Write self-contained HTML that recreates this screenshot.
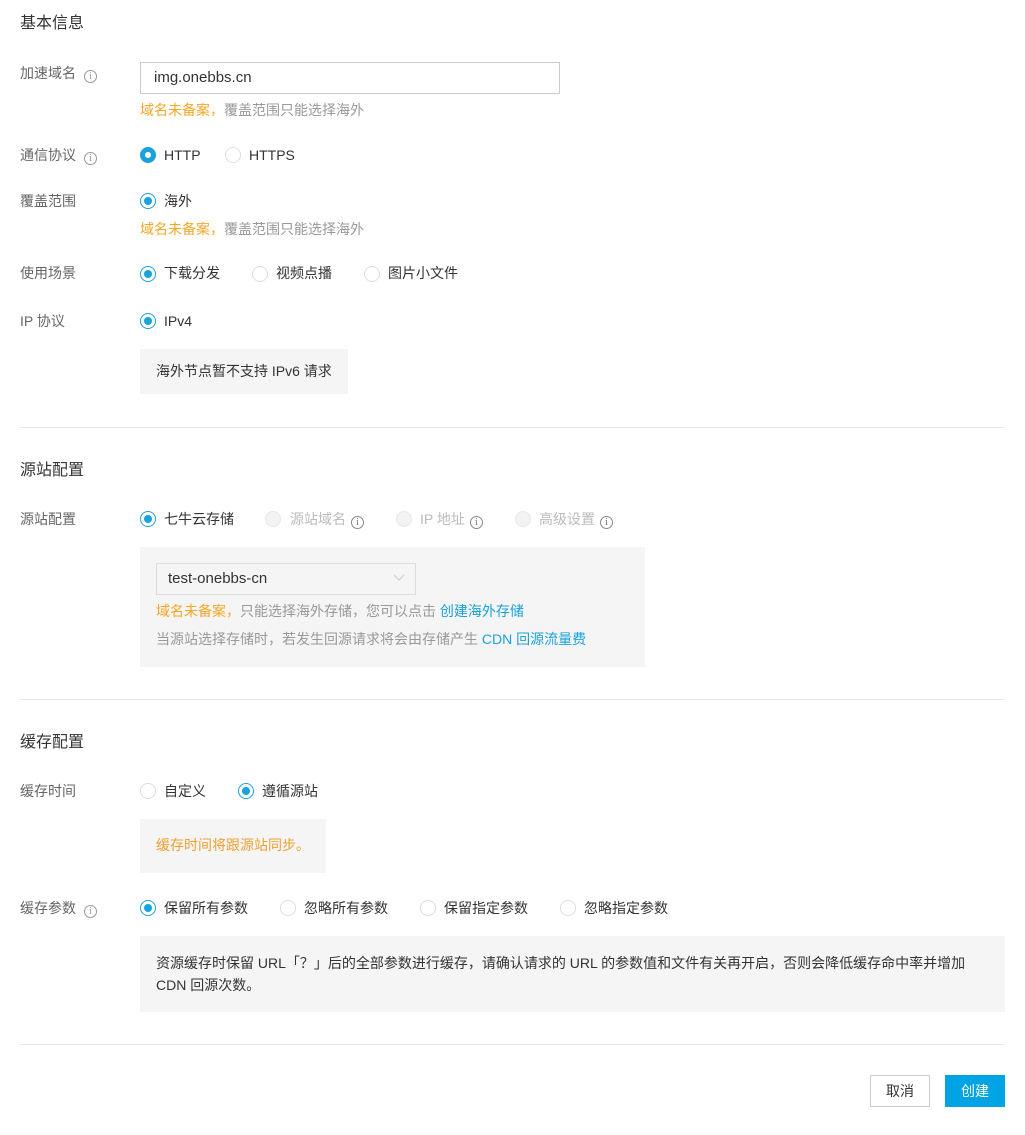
<!DOCTYPE html>
<html><head><meta charset="utf-8"><style>
*{margin:0;padding:0;box-sizing:border-box}
body{width:1025px;height:1135px;background:#fff;position:relative;font-family:"Liberation Sans","Noto Sans CJK SC",sans-serif;font-size:14px;color:#333;overflow:hidden}
.t{position:absolute;line-height:20px;height:20px;white-space:nowrap}
.h{font-size:16px;color:#333}
.l{color:#666}
.o{color:#f5a623}
.g{color:#999}
.b{color:#1aa2dc}
.d{color:#bbb}
.hr{position:absolute;left:20px;width:984px;height:1px;background:#e9e9e9}
.box{position:absolute;background:#f5f5f5}
.r{position:absolute;width:16px;height:16px;border-radius:50%;border:1px solid #ddd;background:#fff}
.r.on{border-color:#1aa2dc}
.r.on::after{content:"";position:absolute;left:3px;top:3px;width:8px;height:8px;border-radius:50%;background:#1aa2dc}
.r.foc{border:5px solid #1aa2dc}
.r.dis{background:#f3f3f3;border-color:#e8e8e8}
.i{display:inline-block;width:13px;height:13px;border:1px solid #999;border-radius:50%;font-size:10px;line-height:11px;text-align:center;color:#999;vertical-align:-1px;margin-left:8px;font-family:"Liberation Serif",serif}
.btn{position:absolute;height:32px;line-height:30px;text-align:center;font-size:14px}
</style></head><body>
<div class="t h" style="left:20px;top:14px">基本信息</div>

<div class="t l" style="left:20px;top:63px">加速域名<span class="i">i</span></div>
<div style="position:absolute;left:140px;top:62px;width:420px;height:32px;border:1px solid #ccc;"></div>
<div class="t" style="left:154px;top:68px;font-size:15px">img.onebbs.cn</div>
<div class="t" style="left:140px;top:100px"><span class="o">域名未备案，</span><span class="g">覆盖范围只能选择海外</span></div>

<div class="t l" style="left:20px;top:145px">通信协议<span class="i">i</span></div>
<div class="r foc" style="left:140px;top:147px"></div><div class="t" style="left:164px;top:145px">HTTP</div>
<div class="r" style="left:225px;top:147px"></div><div class="t" style="left:249px;top:145px">HTTPS</div>

<div class="t l" style="left:20px;top:191px">覆盖范围</div>
<div class="r on" style="left:140px;top:193px"></div><div class="t" style="left:164px;top:191px">海外</div>
<div class="t" style="left:140px;top:219px"><span class="o">域名未备案，</span><span class="g">覆盖范围只能选择海外</span></div>

<div class="t l" style="left:20px;top:263px">使用场景</div>
<div class="r on" style="left:140px;top:266px"></div><div class="t" style="left:164px;top:263px">下载分发</div>
<div class="r" style="left:252px;top:266px"></div><div class="t" style="left:276px;top:263px">视频点播</div>
<div class="r" style="left:364px;top:266px"></div><div class="t" style="left:388px;top:263px">图片小文件</div>

<div class="t l" style="left:20px;top:311px">IP 协议</div>
<div class="r on" style="left:140px;top:313px"></div><div class="t" style="left:164px;top:311px">IPv4</div>

<div class="box" style="left:140px;top:349px;width:208px;height:45px"></div>
<div class="t" style="left:156px;top:361px">海外节点暂不支持 IPv6 请求</div>

<div class="hr" style="top:427px"></div>

<div class="t h" style="left:20px;top:461px">源站配置</div>
<div class="t l" style="left:20px;top:509px">源站配置</div>
<div class="r on" style="left:140px;top:511px"></div><div class="t" style="left:164px;top:509px">七牛云存储</div>
<div class="r dis" style="left:265px;top:511px"></div><div class="t d" style="left:290px;top:509px">源站域名<span class="i" style="border-color:#888;color:#777;margin-left:5px">i</span></div>
<div class="r dis" style="left:396px;top:511px"></div><div class="t d" style="left:420px;top:509px">IP 地址<span class="i" style="border-color:#888;color:#777;margin-left:5px">i</span></div>
<div class="r dis" style="left:515px;top:511px"></div><div class="t d" style="left:539px;top:509px">高级设置<span class="i" style="border-color:#888;color:#777;margin-left:5px">i</span></div>

<div class="box" style="left:140px;top:547px;width:505px;height:120px"></div>
<div style="position:absolute;left:156px;top:563px;width:260px;height:32px;border:1px solid #ddd;background:#f5f5f5"></div>
<div class="t" style="left:168px;top:569px;font-size:15px">test-onebbs-cn</div>
<svg style="position:absolute;left:393px;top:574px" width="12" height="8"><path d="M1 1 L6 6 L11 1" fill="none" stroke="#ccc" stroke-width="1"/></svg>
<div class="t" style="left:156px;top:601px"><span class="o">域名未备案，</span><span class="g">只能选择海外存储，您可以点击 </span><span class="b">创建海外存储</span></div>
<div class="t" style="left:156px;top:629px"><span class="g">当源站选择存储时，若发生回源请求将会由存储产生 </span><span class="b">CDN 回源流量费</span></div>

<div class="hr" style="top:699px"></div>

<div class="t h" style="left:20px;top:733px">缓存配置</div>
<div class="t l" style="left:20px;top:781px">缓存时间</div>
<div class="r" style="left:140px;top:783px"></div><div class="t" style="left:164px;top:781px">自定义</div>
<div class="r on" style="left:238px;top:783px"></div><div class="t" style="left:262px;top:781px">遵循源站</div>
<div class="box" style="left:140px;top:819px;width:186px;height:54px"></div>
<div class="t" style="left:156px;top:835px;color:#f0a030">缓存时间将跟源站同步。</div>

<div class="t l" style="left:20px;top:898px">缓存参数<span class="i">i</span></div>
<div class="r on" style="left:140px;top:900px"></div><div class="t" style="left:164px;top:898px">保留所有参数</div>
<div class="r" style="left:280px;top:900px"></div><div class="t" style="left:304px;top:898px">忽略所有参数</div>
<div class="r" style="left:420px;top:900px"></div><div class="t" style="left:444px;top:898px">保留指定参数</div>
<div class="r" style="left:560px;top:900px"></div><div class="t" style="left:584px;top:898px">忽略指定参数</div>
<div class="box" style="left:140px;top:936px;width:865px;height:76px"></div>
<div class="t" style="left:156px;top:953px">资源缓存时保留 URL「？」后的全部参数进行缓存，请确认请求的 URL 的参数值和文件有关再开启，否则会降低缓存命中率并增加</div>
<div class="t" style="left:156px;top:975px">CDN 回源次数。</div>

<div class="hr" style="top:1044px"></div>

<div class="btn" style="left:870px;top:1075px;width:60px;border:1px solid #ccc;color:#333">取消</div>
<div class="btn" style="left:945px;top:1075px;width:60px;background:#00a4e4;color:#fff;border:1px solid #00a4e4">创建</div>
</body></html>
